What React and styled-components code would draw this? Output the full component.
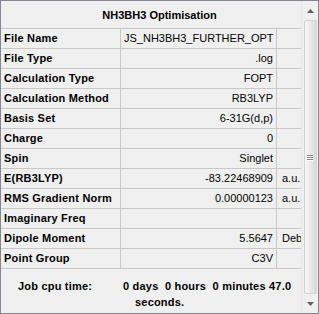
import React from 'react';
import styled, { createGlobalStyle } from 'styled-components';

const GlobalStyle = createGlobalStyle`
  html, body {
    margin: 0;
    padding: 0;
    background: #f0f0f0;
  }
`;

const Frame = styled.div`
  width: 319px;
  height: 314px;
  box-sizing: border-box;
  border: 1px solid #828790;
  background: #f0f0f0;
  display: flex;
  font-family: 'Liberation Sans', Arial, sans-serif;
  font-size: 11px;
  color: #000;
  overflow: hidden;
`;

const Content = styled.div`
  flex: 1;
  display: flex;
  flex-direction: column;
  min-width: 0;
`;

const Title = styled.div`
  height: 27px;
  display: flex;
  align-items: center;
  justify-content: center;
  padding-left: 17px;
  font-weight: bold;
  border-bottom: 1px solid #c8c8c8;
`;

const Table = styled.div`
  display: grid;
  grid-template-columns: 120px 156px 1fr;
`;

const Cell = styled.div`
  height: 19px;
  line-height: 19px;
  border-bottom: 1px solid #c8c8c8;
  border-right: ${(p) => (p.$last ? 'none' : '1px solid #c8c8c8')};
  padding: 0 ${(p) => (p.$unit ? '0 0 5px' : '3px')};
  font-weight: ${(p) => (p.$label ? 'bold' : 'normal')};
  letter-spacing: ${(p) => (p.$label ? '0.2px' : '0')};
  text-align: ${(p) => (p.$label || p.$unit ? 'left' : 'right')};
  white-space: nowrap;
  overflow: hidden;
`;

const Footer = styled.div`
  flex: 1;
  display: grid;
  grid-template-columns: 105px 1fr;
  padding: 9px 0 0 17px;
  font-weight: bold;
  line-height: 16px;
  letter-spacing: 0.2px;
`;

const Time = styled.div`
  white-space: nowrap;
`;

const Wrap = styled.div`
  padding-left: 12px;
`;

const Scrollbar = styled.div`
  width: 16px;
  display: flex;
  flex-direction: column;
  align-items: center;
  background: #f0f0f0;
  border-left: 1px solid #e6e6e6;
`;

const Arrow = styled.div`
  height: 19px;
  display: flex;
  align-items: center;
  justify-content: center;
`;

const Thumb = styled.div`
  flex: 1;
  width: 13px;
  box-sizing: border-box;
  border: 1px solid #d2d2d2;
  border-radius: 2px;
  background: linear-gradient(to right, #f8f8f8, #e6e6e6 60%, #dadada);
  display: flex;
  flex-direction: column;
  align-items: center;
  justify-content: center;
  gap: 1px;
`;

const Grip = styled.div`
  width: 6px;
  height: 1px;
  background: #8a8a8a;
  box-shadow: 0 1px 0 #ffffff;
`;

const rows = [
  ['File Name', 'JS_NH3BH3_FURTHER_OPT', ''],
  ['File Type', '.log', ''],
  ['Calculation Type', 'FOPT', ''],
  ['Calculation Method', 'RB3LYP', ''],
  ['Basis Set', '6-31G(d,p)', ''],
  ['Charge', '0', ''],
  ['Spin', 'Singlet', ''],
  ['E(RB3LYP)', '-83.22468909', 'a.u.'],
  ['RMS Gradient Norm', '0.00000123', 'a.u.'],
  ['Imaginary Freq', '', ''],
  ['Dipole Moment', '5.5647', 'Debye'],
  ['Point Group', 'C3V', ''],
];

const Triangle = ({ down }) => (
  <svg width="7" height="4" viewBox="0 0 7 4">
    <polygon points={down ? '0,0 7,0 3.5,4' : '0,4 7,4 3.5,0'} fill="#606060" />
  </svg>
);

export default function App() {
  return (
    <>
      <GlobalStyle />
      <Frame>
        <Content>
          <Title>NH3BH3 Optimisation</Title>
          <Table>
            {rows.map(([label, value, unit]) => (
              <React.Fragment key={label}>
                <Cell $label>{label}</Cell>
                <Cell>{value}</Cell>
                <Cell $unit $last>{unit}</Cell>
              </React.Fragment>
            ))}
          </Table>
          <Footer>
            <div>Job cpu time:</div>
            <div>
              <Time>0 days&nbsp; 0 hours&nbsp; 0 minutes 47.0</Time>
              <Wrap>seconds.</Wrap>
            </div>
          </Footer>
        </Content>
        <Scrollbar>
          <Arrow>
            <Triangle />
          </Arrow>
          <Thumb>
            <Grip />
            <Grip />
            <Grip />
          </Thumb>
          <Arrow>
            <Triangle down />
          </Arrow>
        </Scrollbar>
      </Frame>
    </>
  );
}
